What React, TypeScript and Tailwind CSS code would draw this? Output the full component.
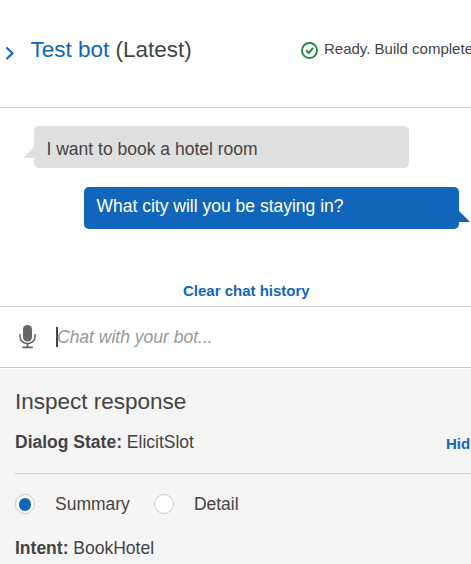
function Header() {
  return (
    <header className="flex h-[108px] items-start border-b border-[#cccccc] whitespace-nowrap">
      <svg className="mt-[46px] ml-[5px] h-[14px] w-[10px] shrink-0" viewBox="0 0 10 14" fill="none" stroke="#1166bb" strokeWidth="2">
        <path d="M1.5 1.5 7.5 7.2 1.5 13" />
      </svg>
      <h1 className="mt-[35px] ml-[15.5px] w-[271px] shrink-0 text-[22.5px] leading-[30px] text-[#444444]">
        <span className="text-[#1166bb]">Test bot</span> (Latest)
      </h1>
      <svg className="mt-[42px] -ml-[0.5px] h-[17px] w-[17px] shrink-0" viewBox="0 0 17 17" fill="none" stroke="#1d8641">
        <circle cx="8.5" cy="8.5" r="7.5" strokeWidth="1.9" />
        <path d="M5.1 8.3 7.8 11 12 5.9" strokeWidth="2" />
      </svg>
      <span className="mt-[39px] ml-[6px] shrink-0 text-[15px] leading-[20px] text-[#444444]">Ready. Build complete</span>
    </header>
  );
}

function Messages() {
  return (
    <section className="flex h-[198px] flex-col pt-[18px] text-[17.5px] leading-[22px]">
      <div className="relative ml-[34px] h-[42px] w-[375px] rounded-[5px] bg-[#e0e0e0] pt-[12px] pl-[12.5px] text-[#444444]">
        I want to book a hotel room
        <svg className="absolute top-[21px] -left-[11px] h-[11px] w-[11px]" viewBox="0 0 11 11">
          <path d="M11 0V11H0Z" fill="#e0e0e0" />
        </svg>
      </div>
      <div className="relative mt-[19px] ml-[84px] h-[42px] w-[375px] rounded-[5px] bg-[#1166bb] pt-[8px] pl-[12.5px] text-white">
        What city will you be staying in?
        <svg className="absolute top-[24px] left-[375px] h-[11px] w-[11px]" viewBox="0 0 11 11">
          <path d="M0 0V11H11Z" fill="#1166bb" />
        </svg>
      </div>
      <button className="mt-[52px] ml-[183px] self-start text-[15px] leading-[20px] font-bold text-[#1166bb]">Clear chat history</button>
    </section>
  );
}

function Composer() {
  return (
    <div className="flex h-[62px] items-start border-y border-[#cccccc]">
      <svg className="mt-[18px] ml-[19px] h-[24px] w-[17px] shrink-0" viewBox="0 0 17 24" fill="none" stroke="#666666">
        <rect x="4" y="0" width="9" height="16.5" rx="4.5" fill="#666666" stroke="none" />
        <path d="M1 9v2.5c0 4.2 3.2 7 7.5 7s7.5-2.8 7.5-7V9" strokeWidth="1.5" />
        <path d="M8.5 18.5V22M3.2 22.3H13.8" strokeWidth="1.7" />
      </svg>
      <div className="mt-[20px] ml-[20px] h-[20px] w-[2px] bg-[#444444]" />
      <span className="mt-[19px] -ml-px text-[17.5px] leading-[22px] text-[#999999] italic">Chat with your bot...</span>
    </div>
  );
}

function Radio({ label, checked = false }: { label: string; checked?: boolean }) {
  return (
    <label className="flex items-center">
      <span className="flex size-[20px] items-center justify-center rounded-full border border-[#cccccc] bg-white">
        {checked && <span className="h-[13px] w-[12px] rounded-full bg-[#1166bb]" />}
      </span>
      <span className="ml-[20px]">{label}</span>
    </label>
  );
}

function Inspector() {
  return (
    <section className="mt-px h-[195px] bg-[#f5f5f5] pl-[15px] text-[17.5px] leading-[22px] text-[#444444]">
      <h2 className="pt-[18px] text-[22.5px] leading-[30px]">Inspect response</h2>
      <div className="flex h-[57px] items-start justify-between border-b border-[#cccccc] pt-[14px] whitespace-nowrap">
        <p><strong>Dialog State:</strong> ElicitSlot</p>
        <button className="mt-[3px] w-[25px] text-left text-[15px] leading-[20px] font-bold text-[#1166bb]">Hid</button>
      </div>
      <div className="mt-[19px] flex gap-[24px]">
        <Radio label="Summary" checked />
        <Radio label="Detail" />
      </div>
      <p className="mt-[22px]"><strong>Intent:</strong> BookHotel</p>
    </section>
  );
}

export default function App() {
  return (
    <main className="h-[564px] w-[471px] overflow-hidden bg-white font-['Liberation_Sans',Arial,sans-serif]">
      <Header />
      <Messages />
      <Composer />
      <Inspector />
    </main>
  );
}
